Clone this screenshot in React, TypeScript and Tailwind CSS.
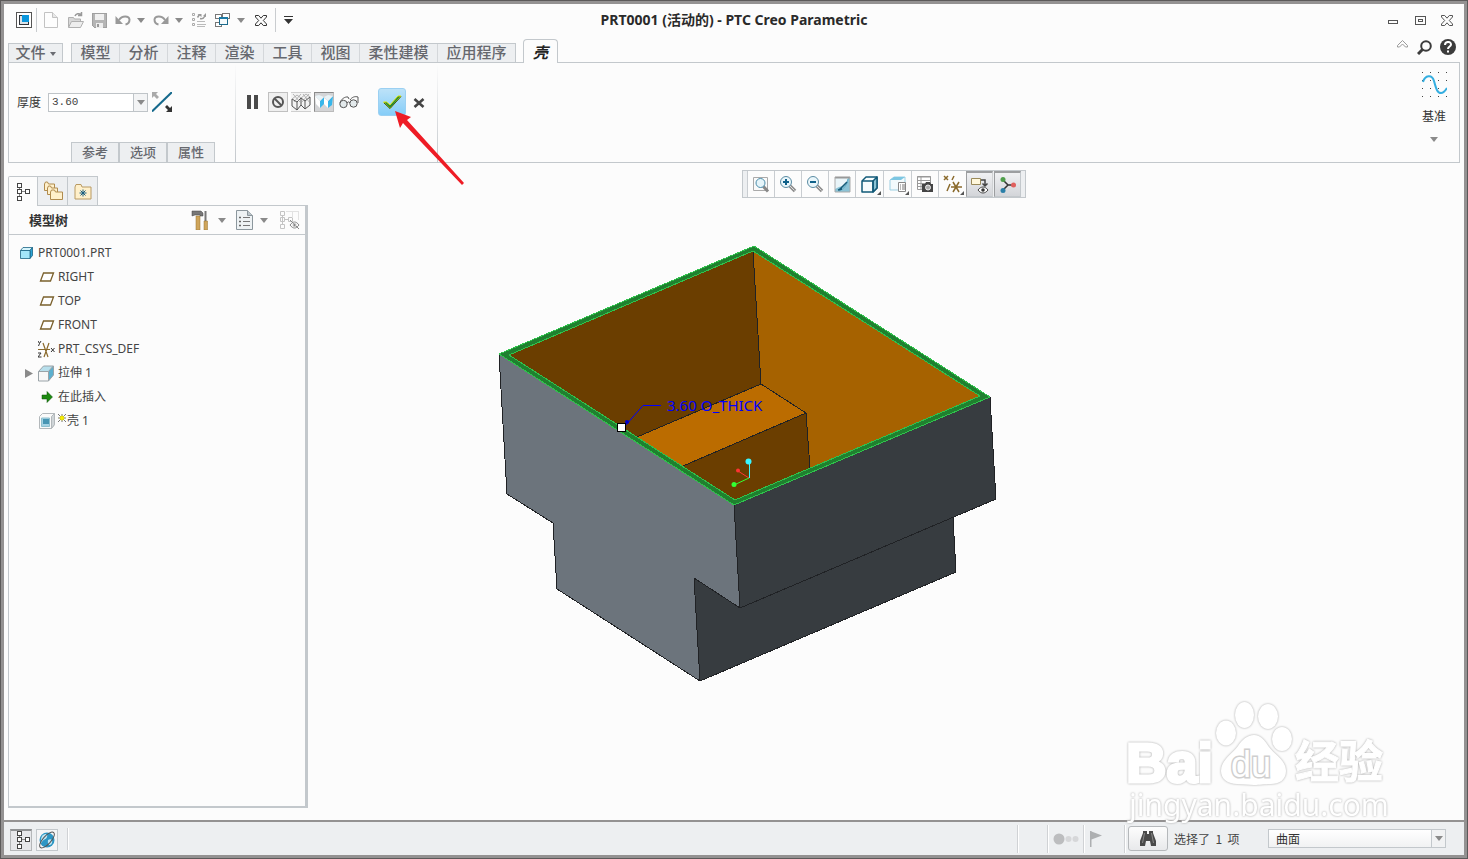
import type { ReactNode } from "react";

const UI = "font-['Noto_Sans','Noto_Sans_CJK_SC',sans-serif]";
const CJK = "font-['Noto_Sans_CJK_SC',sans-serif]";

function Caret({ dark = false }: { dark?: boolean }) {
  return (
    <svg width="8" height="5" viewBox="0 0 8 5" fill={dark ? "#333" : "#8a8a8a"}>
      <path d="M0 0h8L4 5z" />
    </svg>
  );
}

function IconButton({ label, className, children }: { label: string; className: string; children: ReactNode }) {
  return (
    <button type="button" aria-label={label} className={"flex shrink-0 items-center justify-center " + className}>
      {children}
    </button>
  );
}

function TreeGlyph() {
  return (
    <svg width="14" height="20" viewBox="0 0 14 20" fill="#fff" stroke="#444" shapeRendering="crispEdges">
      <path d="M3 5v9M5 9.500h4" fill="none" stroke="#888" />
      <path d="M1.500 1.500h4v4h-4zM1.500 7.500h4v4h-4zM1.500 14.500h4v4h-4zM9.500 7.500h4v4h-4z" />
    </svg>
  );
}

function CloseGlyph({ color }: { color: string }) {
  return (
    <svg width="12" height="11" viewBox="0 0 12 11" fill="none" stroke={color}>
      <path d="M.5 .5h3.200L6 3.200 8.300.5h3.200v1.500L8.300 5.500l3.200 3.500v1.500H8.300L6 7.800 3.700 10.500H.5V9l3.200-3.500L.5 2z" />
    </svg>
  );
}

function QuickAccess() {
  return (
    <div className="flex items-center gap-1 pl-3">
      <svg width="16" height="16" viewBox="0 0 16 16" shapeRendering="crispEdges">
        <path d="M.5 .5h15v15H.5z" fill="#fff" stroke="#555" />
        <path d="M3 3h10v10H3z" fill="#30343a" />
        <path d="M4 4h2v6h6v2H4z" fill="#dce3e8" />
        <path d="M6 3h7v7H6z" fill="#0a96dc" />
      </svg>
      <span className="h-6 w-px bg-[#c9cccf]" />
      <IconButton label="新建" className="h-5 w-5">
        <svg width="14" height="16" viewBox="0 0 14 16" fill="#fdfdfd" stroke="#c2c2c2">
          <path d="M.5 .5h8l5 5v10H.5z" />
          <path d="M8.500.5v5h5" fill="#e8e8e8" />
        </svg>
      </IconButton>
      <IconButton label="打开" className="h-5 w-5">
        <svg width="17" height="16" viewBox="0 0 17 16" fill="#d8d8d8" stroke="#b0b0b0">
          <path d="M1.500 15V5.500h5l1 1.500h6v8z" />
          <path d="M1.500 15.500l3-6h12l-3 6z" fill="#ededed" />
          <path d="M8 4c1-2.500 4-3 6-1.500M14.500 0v3.500H11" fill="none" stroke="#999" strokeWidth="1.500" />
        </svg>
      </IconButton>
      <IconButton label="保存" className="h-5 w-5">
        <svg width="15" height="15" viewBox="0 0 15 15" shapeRendering="crispEdges">
          <path d="M.5 .5h14v14H2.500l-2-2z" fill="#b5b5b5" stroke="#a0a0a0" />
          <path d="M3 1h9v6H3z" fill="#f0f0f0" />
          <path d="M4 10h7v5H4z" fill="#eee" />
          <path d="M5 11h2v3H5z" fill="#999" />
        </svg>
      </IconButton>
      <span className="flex items-center gap-0.5">
        <IconButton label="撤消" className="h-5 w-5">
          <svg width="16" height="12" viewBox="0 0 16 12" fill="none" stroke="#999" strokeWidth="2">
            <path d="M4 6c3-5 10-4.500 10.500-.5 0 3-1.500 4.500-4 5" />
            <path d="M.5 2v8h7.500z" fill="#999" stroke="none" />
          </svg>
        </IconButton>
        <IconButton label="撤消列表" className="h-5 w-3"><Caret /></IconButton>
      </span>
      <span className="flex items-center gap-0.5">
        <IconButton label="重做" className="h-5 w-5">
          <svg width="16" height="12" viewBox="0 0 16 12" fill="none" stroke="#999" strokeWidth="2">
            <path d="M12 6c-3-5-10-4.500-10.500-.5 0 3 1.500 4.500 4 5" />
            <path d="M15.500 2v8H8z" fill="#999" stroke="none" />
          </svg>
        </IconButton>
        <IconButton label="重做列表" className="h-5 w-3"><Caret /></IconButton>
      </span>
      <IconButton label="重新生成" className="h-5 w-5">
        <svg width="16" height="16" viewBox="0 0 16 16" fill="none" stroke="#aaa">
          <path d="M1.500 1.500h2v2h-2zM1.500 6.500h2v2h-2zM1.500 11.500h2v2h-2z" />
          <path d="M6 9.500h8M6 12.500h9M6 14.500h8" stroke="#bbb" />
          <path d="M6.500 5.500l2-3M9 6.500c2 .5 4-.5 5-2.500" stroke="#999" strokeWidth="1.500" />
          <path d="M6.500 2h4v3zM12 4l3-3v4z" fill="#999" stroke="none" />
        </svg>
      </IconButton>
      <span className="flex items-center gap-0.5">
        <IconButton label="窗口" className="h-5 w-5">
          <svg width="16" height="16" viewBox="0 0 16 16" fill="#fff" stroke="#777" shapeRendering="crispEdges">
            <path d="M7.500 1.500h7v5h-7zM.5 2.500h6v4h-6zM.5 10.500h6v4h-6z" />
            <path d="M4.500 5.500h8v7h-8z" stroke="#1b6a8c" fill="#f4fafc" />
            <path d="M4 5h9v2H4z" fill="#1b7aa5" stroke="none" />
          </svg>
        </IconButton>
        <IconButton label="窗口列表" className="h-5 w-3"><Caret /></IconButton>
      </span>
      <IconButton label="关闭窗口" className="h-5 w-5"><CloseGlyph color="#333" /></IconButton>
      <span className="h-6 w-px bg-[#c9cccf]" />
      <IconButton label="自定义快速访问工具栏" className="h-5 w-4">
        <svg width="9" height="8" viewBox="0 0 9 8" fill="#333"><path d="M0 0h9v1H0zM0 3h9L4.500 8z" /></svg>
      </IconButton>
    </div>
  );
}

function TitleBar() {
  return (
    <header className="grid h-8 grid-cols-[1fr_auto_1fr] items-center">
      <QuickAccess />
      <h1 className={UI + " text-sm leading-5 font-bold text-[#2a2a2a]"}>PRT0001 (活动的) - PTC Creo Parametric</h1>
      <div className="flex items-center justify-end gap-[7px] pr-[7px]">
        <IconButton label="最小化" className="h-5 w-5">
          <svg width="10" height="11" viewBox="0 0 10 11" fill="none" stroke="#555" shapeRendering="crispEdges"><path d="M.5 5.500h9v3h-9z" /></svg>
        </IconButton>
        <IconButton label="最大化" className="h-5 w-5">
          <svg width="11" height="9" viewBox="0 0 11 9" fill="none" stroke="#555" shapeRendering="crispEdges"><path d="M.5 .5h10v8H.5zM3.500 3.500h4v2h-4z" /></svg>
        </IconButton>
        <IconButton label="关闭" className="h-5 w-5"><CloseGlyph color="#555" /></IconButton>
      </div>
    </header>
  );
}

const ribbonTabs = ["模型", "分析", "注释", "渲染", "工具", "视图", "柔性建模", "应用程序"];

function RibbonTabs() {
  return (
    <nav className={CJK + " mx-1 -mb-px flex h-[27px] items-end text-[15px] leading-4 font-medium text-[#66686e]"}>
      <button type="button" className="flex h-5 w-[55px] justify-center gap-1 border border-[#c3c8cc] bg-[#edeff1]">
        文件
        <svg className="mt-2" width="6" height="4" viewBox="0 0 6 4" fill="#6a6c72"><path d="M0 0h6L3 4z" /></svg>
      </button>
      <div className="ml-2 flex h-5 border-y border-l border-[#c3c8cc] bg-[#edeff1]">
        {ribbonTabs.map((tab) => (
          <button
            key={tab}
            type="button"
            className={"flex justify-center border-r border-[#d4d7da] whitespace-nowrap last:border-[#c3c8cc] " + (tab.length > 2 ? "w-[78px]" : "w-12")}
          >
            {tab}
          </button>
        ))}
      </div>
      <button type="button" className="relative ml-[7px] flex h-6 w-[35px] justify-center rounded-t-sm border border-b-0 border-[#c3c8cc] bg-[#fcfcfc] pt-1 font-bold text-[#222] italic">
        壳
      </button>
      <div className="mb-1 ml-auto flex items-center gap-1.5 pr-1">
        <IconButton label="最小化功能区" className="mb-1 h-5 w-3">
          <svg width="11" height="10" viewBox="0 0 11 10" fill="none" stroke="#999"><path d="M.5 5.500l5-5 5 5v1.500h-2L5.500 4l-3 3h-2z" /></svg>
        </IconButton>
        <IconButton label="命令搜索" className="h-5 w-5">
          <svg width="15" height="15" viewBox="0 0 15 15" fill="none" stroke="#3c3c3c" strokeWidth="2"><circle cx="9" cy="6" r="4.800" /><path d="M5.500 9.500L1 14" strokeWidth="3" /></svg>
        </IconButton>
        <button type="button" aria-label="帮助" className="flex h-4 w-4 items-center justify-center rounded-full bg-[#3c3c3c]">
          <svg width="10" height="12" viewBox="0 0 10 12" fill="none" stroke="#fff" strokeWidth="2"><path d="M2 4c0-4 6-4 6-.5C8 5.500 5 5.500 5 8M5 9.500v2" /></svg>
        </button>
      </div>
    </nav>
  );
}

function ShellDashboard() {
  return (
    <section className="mx-1 flex h-[101px] border border-[#c3c8cc]">
      <div className="flex w-[226px] flex-col justify-between pt-[25px]">
        <div className="flex h-7 items-center pl-2">
          <label htmlFor="thickness" className={CJK + " mr-[7px] text-xs text-[#333]"}>厚度</label>
          <input id="thickness" defaultValue="3.60" className="h-[19px] w-[86px] border border-[#bfc4c8] bg-white px-[3px] font-['Liberation_Mono',monospace] text-[11px] text-[#444]" />
          <IconButton label="厚度列表" className="h-[19px] w-[14px] border border-l-0 border-[#bfc4c8] bg-[#f3f4f5]"><Caret /></IconButton>
          <IconButton label="反向" className="ml-1 h-5 w-5">
            <svg width="20" height="20" viewBox="0 0 20 20">
              <path d="M0 19.500L20 0" stroke="#15698c" strokeWidth="2" />
              <path d="M0 0h6L4 2l3 3-2 2-3-3-2 2z" fill="#aaa" />
              <path d="M20 20h-6l2-2-3-3 2-2 3 3 2-2z" fill="#333" />
            </svg>
          </IconButton>
        </div>
        <div className={CJK + " ml-[62px] flex h-5 text-[13px] leading-4 font-medium text-[#66686e]"}>
          {["参考", "选项", "属性"].map((tab) => (
            <button key={tab} type="button" className="flex w-12 justify-center border border-b-0 border-[#c3c8cc] bg-[#edeff1] pt-px">
              {tab}
            </button>
          ))}
        </div>
      </div>
      <div className="w-px bg-linear-to-b from-transparent to-[#c3c8cc]" />
      <div className="flex w-[201px] pt-[25px] pl-1.5">
        <div className="flex h-7 items-center gap-[3px]">
          <IconButton label="暂停" className="mr-[3px] h-5 w-5">
            <svg width="12" height="14" viewBox="0 0 12 14" fill="#4a4a4a"><path d="M1 0h4v14H1zM8 0h4v14H8z" /></svg>
          </IconButton>
          <IconButton label="无预览" className="h-5 w-5 border border-[#c0c0c0] bg-[#efefef]">
            <svg width="14" height="14" viewBox="0 0 14 14" fill="none" stroke="#555" strokeWidth="2"><circle cx="7" cy="7" r="5" /><path d="M3.500 3.500l7 7" /></svg>
          </IconButton>
          <IconButton label="分离预览" className="h-5 w-5 border border-x-0 border-[#cfcfcf] bg-[#f4f4f4]">
            <svg width="20" height="18" viewBox="0 0 20 18" fill="none" stroke="#777">
              <path d="M1 6v7l5 4 4-5V5M6 9v8M1 6l5 3 4-4M10 12l4 4 5-4V4M14 8v8M10 5l4 3 5-4" stroke="#555" />
              <path d="M1 6l5-4 4 3 5-4 4 3M2 1l7 8M10 1L3 9M12 1l7 9M18 1l-8 9" stroke="#999" strokeWidth=".7" />
            </svg>
          </IconButton>
          <IconButton label="连接预览" className="h-5 w-5 border border-[#8b8b8b] border-r-[#bbb] border-b-[#bbb] bg-[#d3d4d6]">
            <svg width="18" height="16" viewBox="0 0 18 16">
              <path d="M0 2l5 5v7l-4-4zM9 4l4 3v7l-4-4z" fill="#fff" />
              <path d="M5 7l4-4v7l-4 4zM13 7l5-5-1 9-4 3z" fill="#38b6ea" />
              <path d="M0 2l4-1 5 2-4 4zM9 3l4-2 5 1-5 5z" fill="#e9f2f6" />
            </svg>
          </IconButton>
          <IconButton label="特征预览" className="h-5 w-6">
            <svg width="20" height="14" viewBox="0 0 20 14" fill="#e3eaec" stroke="#555">
              <circle cx="4.500" cy="9" r="3.700" />
              <circle cx="14.500" cy="8.500" r="3.700" />
              <path d="M8 8c1-1.500 2-1.500 3 0M1 8c1-4 5-6.500 8-6l1 2M11 5c2-3 5-4 8-3v6" fill="none" />
            </svg>
          </IconButton>
          <IconButton label="确定" className="ml-3.5 h-7 w-7 rounded-[3px] border border-[#9bd0f2] bg-linear-to-b from-[#bce2f8] to-[#85cdf8]">
            <svg width="20" height="16" viewBox="0 0 20 16"><path d="M1.500 8h3L8 11 16 2h3L8 14.500z" fill="#238a35" stroke="#e4e600" /><path d="M2 9l6 5.500L19 2.500" fill="none" stroke="#365b22" /></svg>
          </IconButton>
          <IconButton label="取消" className="h-5 w-5">
            <svg width="12" height="12" viewBox="0 0 12 12" fill="none" stroke="#454545" strokeWidth="2.600"><path d="M1.500 3l9 8M10.500 3l-9 8" /></svg>
          </IconButton>
        </div>
      </div>
      <div className="w-px bg-linear-to-b from-transparent to-[#c3c8cc]" />
      <button type="button" className="mr-px ml-auto flex w-12 flex-col items-center pt-2">
        <svg width="26" height="28" viewBox="0 0 26 28">
          <path d="M1 1h1v1H1zM9 1h1v1H9zM17 1h1v1h-1zM25 1h1v1h-1zM1 9h1v1H1zM9 9h1v1H9zM17 9h1v1h-1zM25 9h1v1h-1zM1 17h1v1H1zM9 17h1v1H9zM17 17h1v1h-1zM25 17h1v1h-1zM1 25h1v1H1zM9 25h1v1H9zM17 25h1v1h-1zM25 25h1v1h-1z" fill="#444" />
          <path d="M2 11C4 4 11 3 13 10s3 12 7 12c3 0 4-2 6-5" fill="none" stroke="#35aee0" strokeWidth="2" />
        </svg>
        <span className={CJK + " mt-[9px] mb-[13px] text-xs leading-4 text-[#333]"}>基准</span>
        <Caret />
      </button>
    </section>
  );
}

function Magnifier({ sign }: { sign: string }) {
  return (
    <svg width="18" height="18" viewBox="0 0 18 18" fill="none">
      <path d="M10.500 10.500l5.500 5.500" stroke="#8e8e8e" strokeWidth="3.500" />
      <path d="M11 11l4.500 4.500" stroke="#ddd" />
      <circle cx="7" cy="7" r="5.500" fill="#e9f6fb" stroke="#5b8ca3" />
      <path d={sign} stroke="#0f618a" strokeWidth="2" />
    </svg>
  );
}

const viewTools = [
  {
    label: "重新调整",
    icon: (
      <svg width="18" height="18" viewBox="0 0 18 18" fill="none">
        <path d="M1.500 2.500h14v13h-14z" fill="#fafafa" stroke="#aaa" />
        <path d="M11 11l5 5.500" stroke="#888" strokeWidth="3" />
        <circle cx="8.500" cy="8" r="4.500" fill="#e6f5fa" stroke="#4b8dab" />
      </svg>
    ),
  },
  { label: "放大", icon: <Magnifier sign="M4 7h6M7 4v6" /> },
  { label: "缩小", icon: <Magnifier sign="M4 7h6" /> },
  {
    label: "重画",
    icon: (
      <svg width="17" height="17" viewBox="0 0 17 17">
        <path d="M1 1h15v15H1z" fill="#8cc3d6" />
        <path d="M1 2h13c-1 5-4 8-9 9l-4 2z" fill="#eaf5f9" />
        <path d="M5 15c5-2 8-6 9-12" fill="none" stroke="#5faac5" />
        <path d="M5 14l8-8M4 14l4-1" stroke="#175b78" strokeWidth="1.500" />
        <path d="M1 1.500h15" stroke="#999" strokeWidth="2" />
        <path d="M16 1v15M1 16h15M1 1v15" stroke="#aaa" />
      </svg>
    ),
  },
  {
    label: "显示样式",
    more: true,
    icon: (
      <svg width="17" height="17" viewBox="0 0 17 17" stroke="#125a78" strokeWidth="1.500" strokeLinejoin="round">
        <path d="M1 5l4-4h11v11l-4 4H1z" fill="#f7fcfd" />
        <path d="M12 5l4-4v11l-4 4z" fill="#8bc4d6" />
        <path d="M1 5h11v11" fill="none" />
      </svg>
    ),
  },
  {
    label: "已保存方向",
    more: true,
    icon: (
      <svg width="18" height="18" viewBox="0 0 18 18">
        <path d="M1 5l4-3h11v9l-3 4H1z" fill="#f2fafc" stroke="#9ccfe2" />
        <path d="M1 5l4-3h11l-4 3z" fill="#7cc6e2" />
        <path d="M9.500 7.500h7v9h-7z" fill="#fff" stroke="#888" />
        <path d="M11 10h1M13 10h3M11 12h1M13 12h3M11 14h1M13 14h3" stroke="#777" />
      </svg>
    ),
  },
  {
    label: "视图管理器",
    icon: (
      <svg width="18" height="18" viewBox="0 0 18 18">
        <path d="M1.500 1.500h13v13h-13z" fill="#fff" stroke="#999" />
        <path d="M1 2h14M1 5.500h14M1 8.500h14M1 11.500h14M5 2v12" stroke="#999" />
        <path d="M6 9h3l1-2h4l1 2h2v8H6z" fill="#444" />
        <circle cx="12" cy="12.500" r="2.500" fill="#aaa" stroke="#eee" />
      </svg>
    ),
  },
  {
    label: "基准显示过滤器",
    more: true,
    icon: (
      <svg width="19" height="18" viewBox="0 0 19 18" fill="none" stroke="#8a6a2c" strokeWidth="1.500">
        <path d="M1 1l4 4M5 1L1 5M11 1L9 5M7 9l-3 7M8 12h11M10 7l6 10M16 7l-6 10" />
      </svg>
    ),
  },
];

function ViewToolbar() {
  return (
    <div className="flex h-7 self-center border border-[#c3c8cc] bg-[#edeff1]">
      <span className="w-1" />
      {viewTools.map((tool) => (
        <button
          key={tool.label}
          type="button"
          aria-label={tool.label}
          className={"relative flex items-center justify-center border-l border-[#c9cdd1] bg-[#fcfcfc] " + (tool.more ? "w-7" : "w-[27px]")}
        >
          {tool.icon}
          {tool.more && (
            <svg className="absolute right-0.5 bottom-0.5" width="4" height="4" viewBox="0 0 4 4" fill="#555"><path d="M4 0v4H0z" /></svg>
          )}
        </button>
      ))}
      <IconButton label="注释显示" className="w-[27px] border border-t-2 border-[#9c9ea0] border-r-[#d0d2d4] border-b-[#c3c8cc] bg-linear-to-b from-[#f0f1f3] to-[#d3d5d9]">
        <svg width="19" height="18" viewBox="0 0 19 18" fill="none">
          <path d="M1.500 2.500h9v6h-9z" fill="#fff8dc" stroke="#9a8a5a" />
          <path d="M11 4h4v5M12.500 7.500l2.500 2.500 2.500-2.500" stroke="#444" strokeWidth="1.500" />
          <path d="M8 14c3-4 7-4 10 0-3 4-7 4-10 0z" fill="#fff" stroke="#444" />
          <circle cx="13" cy="14" r="1.800" fill="#333" />
        </svg>
      </IconButton>
      <IconButton label="旋转中心" className="ml-px w-[27px] border border-t-2 border-[#9c9ea0] border-r-[#c3c8cc] border-b-[#c3c8cc] bg-linear-to-b from-[#f0f1f3] to-[#d3d5d9]">
        <svg width="18" height="18" viewBox="0 0 18 18">
          <path d="M3 3l6 6-5 5M9 9h5" fill="none" stroke="#333" strokeWidth="1.500" />
          <circle cx="4" cy="3.500" r="2.500" fill="#4f9e4b" />
          <circle cx="14.500" cy="9" r="2.500" fill="#e0605e" />
          <circle cx="4" cy="14.500" r="2.500" fill="#2a7fa8" />
        </svg>
      </IconButton>
      <span className="w-1" />
    </div>
  );
}

const planeIcon = (
  <svg width="16" height="10" viewBox="0 0 16 10" fill="#fff" stroke="#7a602c" strokeWidth="1.300"><path d="M4.500 1h10l-3 8h-10z" /></svg>
);

const treeItems = [
  { name: "RIGHT", icon: planeIcon },
  { name: "TOP", icon: planeIcon },
  { name: "FRONT", icon: planeIcon },
  {
    name: "PRT_CSYS_DEF",
    icon: (
      <svg width="17" height="17" viewBox="0 0 17 17" fill="none" stroke="#8a6a2c" strokeWidth="1.200">
        <path d="M0 8.500h12M5 2l5 14M11 2L6 16" />
        <path d="M0 0l1.500 2.500L3 0M1.500 2.500L.5 5M0 12h3l-3 4h3.500M13 7l3.500 4M16.500 7L13 11" stroke="#333" strokeWidth="1" />
      </svg>
    ),
  },
  {
    name: "拉伸 1",
    expandable: true,
    icon: (
      <svg width="17" height="17" viewBox="0 0 17 17" stroke="#9aa3a8">
        <path d="M.5 6.500l5-5.500h10l-5 5.500z" fill="#b7dfec" />
        <path d="M10.500 6.500l5-5.500v9l-5 6z" fill="#5cb0cf" />
        <path d="M.5 6.500h10v9.500H.5z" fill="#f7f7f7" />
      </svg>
    ),
  },
  {
    name: "在此插入",
    icon: <svg width="12" height="12" viewBox="0 0 12 12"><path d="M1 4h5V.5L11.500 6 6 11.500V8H1z" fill="#1c8a10" stroke="#0d4f08" strokeWidth=".5" /></svg>,
  },
  {
    name: "壳 1",
    fresh: true,
    icon: (
      <svg width="16" height="16" viewBox="0 0 16 16" stroke="#b3b8bb">
        <path d="M.5 3.500l3-3h12v11l-3 4H.5z" fill="#fafafa" />
        <path d="M12.500 3.500l3-3v11l-3 4z" fill="#cfd5d8" />
        <path d="M2.500 5h8v8.500h-8z" fill="#a4d2e4" stroke="#8cbfce" />
        <path d="M4 6h6v5H4z" fill="#4795b3" stroke="none" />
      </svg>
    ),
  },
];

function ModelTree() {
  return (
    <aside className="mt-[13px] mb-3 ml-1 flex w-[300px] shrink-0 flex-col">
      <div className="relative -mb-px flex h-[30px]">
        <IconButton label="模型树" className="w-[30px] rounded-tl-xs border border-b-0 border-[#c3c8cc] bg-[#fcfcfc]"><TreeGlyph /></IconButton>
        <IconButton label="文件夹浏览器" className="w-[30px] border border-l-0 border-[#c3c8cc] bg-[#edeff1]">
          <svg width="20" height="20" viewBox="0 0 20 20" fill="#fff0cb" stroke="#b08b4e">
            <path d="M1.500 3v6.500h10V3h-6L4.500 1h-2z" />
            <path d="M4.500 7v6.500h10V7h-6L7.500 5h-2z" />
            <path d="M7.500 11v7.500h12V11h-7l-1-2h-3z" />
          </svg>
        </IconButton>
        <IconButton label="收藏夹" className="w-[30px] border border-l-0 border-[#c3c8cc] bg-[#edeff1]">
          <svg width="18" height="17" viewBox="0 0 18 17">
            <path d="M1 4v12h16V4H8L7 1.500H2z" fill="#fff0cb" stroke="#b99a62" />
            <path d="M9 6.500v7M5.500 10h7M6.500 7.500l5 5M11.500 7.500l-5 5" stroke="#165d80" />
          </svg>
        </IconButton>
      </div>
      <div className="flex-1 border border-r-[3px] border-b-2 border-[#c3c8cc]">
        <div className="flex h-[29px] items-center border-b border-[#c3c8cc] pr-[5px] pl-5">
          <h2 className={CJK + " text-[13px] leading-5 font-bold text-[#333]"}>模型树</h2>
          <IconButton label="设置" className="ml-auto h-5 w-5">
            <svg width="18" height="20" viewBox="0 0 18 20">
              <path d="M1 1h9l2 2v3H9V5H4L1 6z" fill="#777" stroke="#444" strokeWidth=".5" />
              <path d="M5 6h4v14H5z" fill="#cfa55b" stroke="#96722f" strokeWidth=".5" />
              <path d="M14.500 1v10" stroke="#777" strokeWidth="2" />
              <path d="M13 11h3.500v9H13z" fill="#cfa55b" stroke="#96722f" strokeWidth=".5" />
            </svg>
          </IconButton>
          <IconButton label="设置列表" className="ml-1.5 h-5 w-3"><Caret /></IconButton>
          <IconButton label="显示" className="ml-1.5 h-5 w-5">
            <svg width="17" height="20" viewBox="0 0 17 20" fill="none">
              <path d="M.5 .5h11l5 5v14H.5z" fill="#eef2f4" stroke="#8c979d" />
              <path d="M11.500.5v5h5" fill="#bcc5ca" stroke="#8c979d" />
              <path d="M7 7.500h7M7 11.500h7M7 15.500h7" stroke="#777" />
              <path d="M3.500 7h1v1h-1zM3.500 11h1v1h-1zM3.500 15h1v1h-1z" stroke="#666" />
            </svg>
          </IconButton>
          <IconButton label="显示列表" className="ml-1 h-5 w-3"><Caret /></IconButton>
          <IconButton label="隐藏" className="ml-2.5 h-5 w-5">
            <svg width="20" height="20" viewBox="0 0 20 20" fill="none" stroke="#c4c4c4">
              <path d="M.5 1.500h4v4h-4zM.5 7.500h4v4h-4zM.5 14.500h4v4h-4zM8.500 7.500h4v4h-4zM2.500 5v9M5 9.500h3" />
              <path d="M6 1.500h13M12.500 2v6M18.500 2v8" stroke="#e2e2e2" />
              <path d="M10 15c3-4 6-4 9 0-3 4-6 4-9 0zM10 10l9 9" stroke="#888" />
              <circle cx="14.500" cy="15" r="1.500" fill="#888" />
            </svg>
          </IconButton>
        </div>
        <ul className={UI + " pt-1.5 text-xs leading-6 text-[#444]"}>
          <li className="flex h-6 items-center gap-[5px] pl-[11px]">
            <svg width="13" height="12" viewBox="0 0 13 12" stroke="#1b6384" strokeWidth=".8">
              <path d="M.5 3.500l2.500-3h9.500l-2.500 3z" fill="#d5f4fb" />
              <path d="M10 3.500l2.500-3v8l-2.500 3z" fill="#2ba4d6" />
              <path d="M.5 3.500H10v8H.5z" fill="#a3e6fa" />
            </svg>
            PRT0001.PRT
          </li>
          {treeItems.map((item) => (
            <li key={item.name} className="flex h-6 items-center pl-3.5">
              <span className="w-[15px]">
                {item.expandable && <svg width="8" height="9" viewBox="0 0 8 9" className="ml-0.5" fill="#8a8a8a"><path d="M0 0l8 4.500L0 9z" /></svg>}
              </span>
              <span className="mr-[3px] flex w-[17px] justify-center">{item.icon}</span>
              {item.fresh && (
                <svg width="8" height="8" viewBox="0 0 8 8" className="mr-px mb-1.5" stroke="#555" strokeWidth=".8">
                  <path d="M0 0l8 8M8 0L0 8M4 0v8M0 4h8" />
                  <circle cx="4" cy="4" r="2" fill="#f8ef00" stroke="#e6dc00" />
                </svg>
              )}
              {item.name}
            </li>
          ))}
        </ul>
      </div>
    </aside>
  );
}

function ShellModel() {
  return (
    <svg className="mt-8 ml-[172px] shrink-0" width="540" height="460" viewBox="480 230 540 460" strokeLinejoin="round">
      <g stroke="#202225" strokeWidth="1" shapeRendering="crispEdges">
        <path d="M694 578L740 608 953 517 956 572 700 681z" fill="#373c40" />
        <path d="M734 505L990 397 996 499 740 608z" fill="#373c40" />
        <path d="M499 354L507 494 553 523 557 589 700 681 694 578 740 608 734 505z" fill="#6c747c" />
      </g>
      <path d="M499 354L754 246 990 397 734 505z" fill="#1f802f" stroke="#2fc24c" shapeRendering="crispEdges" />
      <g shapeRendering="crispEdges">
        <path d="M509 355L753 251 761 384 637 437z" fill="#6b3e00" />
        <path d="M753 251L980 396 810 468 806 413 761 384z" fill="#a66200" />
        <path d="M761 384L806 413 683 466 637 437z" fill="#bb6c00" />
        <path d="M806 413L810 468 735 500 683 466z" fill="#6b3e00" />
        <path d="M753 251L761 384 806 413 810 468M761 384L637 437M806 413L683 466" fill="none" stroke="#202225" />
        <path d="M509 355L753 251 980 396 735 500z" fill="none" stroke="#2fc24c" />
      </g>
      <path d="M625 426L643 405.500H661" fill="none" stroke="#00f" />
      <circle cx="627" cy="422" r="2" fill="#00c" />
      <path d="M617.500 423.500h8v8h-8z" fill="#fff" stroke="#000" shapeRendering="crispEdges" />
      <text x="667" y="411" fill="#00f" className={UI + " text-[15px]"}>3.60 O_THICK</text>
      <path d="M749.500 478V462" stroke="#38f6ff" />
      <path d="M749 478l-11-7" stroke="#f33" />
      <path d="M749 478l-15 7" stroke="#3f3" />
      <circle cx="748.500" cy="461.500" r="3" fill="#38f6ff" />
      <circle cx="738" cy="470.500" r="2" fill="#f33" />
      <circle cx="734" cy="484.500" r="2.500" fill="#3f3" />
    </svg>
  );
}

function Watermark() {
  return (
    <svg className="pointer-events-none absolute right-[74px] bottom-[30px]" width="270" height="130" viewBox="1120 696 270 130" fill="#fff">
      <g className="drop-shadow-[0_0_1px_#a8a8a8]">
        <text x="1126" y="783" stroke="#fff" strokeWidth="3" className="font-['Liberation_Sans',sans-serif] text-[56px] font-bold">Bai</text>
        <ellipse cx="1226" cy="734" rx="10" ry="12.500" />
        <ellipse cx="1244.500" cy="716" rx="9.500" ry="13" />
        <ellipse cx="1268" cy="717.500" rx="10" ry="12.500" />
        <ellipse cx="1282" cy="740" rx="10" ry="12" />
        <path d="M1254 736c7 0 11 6 15 12 5 7 17 13 17 24 0 9-7 13-15 13-7 0-11 1-17 1s-11-1-17-1c-9 0-16-5-16-13 0-11 11-17 17-25 4-6 9-11 16-11z" />
        <text x="1295" y="779" stroke="#fff" strokeWidth="1" className="font-['Noto_Sans_CJK_SC',sans-serif] text-[44px] font-bold">经验</text>
        <text x="1129" y="817" className="font-['Noto_Sans',sans-serif] text-[30px]">jingyan.baidu.com</text>
      </g>
      <text x="1231" y="778" stroke="#cfcfcf" strokeWidth="3" paintOrder="stroke" className="font-['Liberation_Sans',sans-serif] text-[36px]">du</text>
    </svg>
  );
}

function StatusBar() {
  const divider = <span className="h-7 w-0.5 border-r border-l border-r-white border-l-[#d0d2d5]" />;
  return (
    <footer className={CJK + " flex h-[35px] items-center border-t-2 border-[#949292] bg-[#edeff1] pr-[18px] pl-1.5 text-xs text-[#444]"}>
      <IconButton label="导航器" className="mt-0.5 h-[22px] w-[22px] border border-t-2 border-[#b5b7b9] border-t-[#909294] bg-[#e6e7ea] pl-1"><TreeGlyph /></IconButton>
      <IconButton label="浏览器" className="mt-0.5 ml-1 h-[22px] w-[22px] border border-[#c3c8cc] bg-[#f5f5f6]">
        <svg width="18" height="18" viewBox="0 0 18 18">
          <circle cx="9" cy="9" r="7.500" fill="#2d96c4" />
          <path d="M5 4c3-2 5-1 4 2s-4 2-5 5-2-5 1-7zM10 9c3-2 5 0 4 3s-5 3-4-3z" fill="#bfe6f4" />
          <ellipse cx="9" cy="9" rx="10" ry="4" transform="rotate(-48 9 9)" fill="none" stroke="#555" />
        </svg>
      </IconButton>
      <span className="w-[9px]" />
      <span className="h-[22px] w-0.5 border-r border-l border-r-white border-l-[#d0d2d5]" />
      <div className="ml-auto flex items-center">
        {divider}
        <span className="w-7" />
        {divider}
        <span className="flex w-[34px] justify-center">
          <svg width="26" height="12" viewBox="0 0 26 12" fill="#d6d7d9"><circle cx="6" cy="6" r="5.500" fill="#bcbdbf" /><circle cx="15.500" cy="6" r="3" /><circle cx="22.500" cy="6" r="3" /></svg>
        </span>
        {divider}
        <span className="flex w-[39px] pl-[5px]">
          <svg width="12" height="18" viewBox="0 0 12 18" fill="#adafb1"><path d="M0 1h1.500v16H0zM1.500 1.500L12 5.500l-10.500 4z" /></svg>
        </span>
        {divider}
        <IconButton label="搜索" className="ml-0.5 h-[25px] w-10 rounded-[3px] border border-[#b5b8bb] bg-linear-to-b from-[#fdfdfd] to-[#e8e9eb]">
          <svg width="16" height="15" viewBox="0 0 16 15" fill="#4a4a4a">
            <path d="M3 0h4v3h2V0h4v2l3 8v5h-5l-1-5H6l-1 5H0v-5l3-8z" />
            <path d="M4.500 2L2.500 12M11.500 2l2 10" stroke="#8a8a8a" />
          </svg>
        </IconButton>
        <label htmlFor="filter" className="ml-1.5 w-[94px] leading-4 whitespace-pre">选择了  1  项</label>
        <div className="relative">
          <select id="filter" className="block h-[19px] w-[178px] appearance-none border border-[#c3c8cc] bg-linear-to-b from-white to-[#f1f2f3] pl-[7px] text-xs leading-4 text-[#333]">
            <option>曲面</option>
          </select>
          <span className="pointer-events-none absolute inset-y-0 right-0 flex w-[15px] items-center justify-center border border-[#c3c8cc] bg-[#f1f2f3]"><Caret /></span>
        </div>
      </div>
    </footer>
  );
}

export default function App() {
  return (
    <div className="min-h-screen border border-[#5c5a5a] bg-[#949292] p-[3px]">
      <div className="relative flex min-h-[calc(100vh-8px)] flex-col bg-[#fcfcfc]">
        <TitleBar />
        <RibbonTabs />
        <ShellDashboard />
        <div className="flex flex-1">
          <ModelTree />
          <main className="flex flex-1 flex-col pt-[7px] pr-1">
            <ViewToolbar />
            <ShellModel />
          </main>
        </div>
        <StatusBar />
        <Watermark />
        {/* callout pointing at the confirm button */}
        <svg className="pointer-events-none absolute top-[104px] left-[386px]" width="78" height="82" viewBox="390 108 78 82" fill="#ee1c25">
          <path d="M395 111l16 6-4 3 57 63-2 2-59-62-3 5z" />
        </svg>
      </div>
    </div>
  );
}
